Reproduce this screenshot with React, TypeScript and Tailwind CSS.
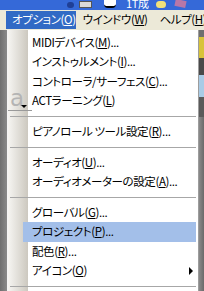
import React from 'react';

type Item = { label: string; key: string; tail?: string; highlight?: boolean; sub?: boolean; act?: boolean };

const groups: Item[][] = [
  [
    { label: 'MIDIデバイス', key: 'M', tail: '...' },
    { label: 'インストゥルメント', key: 'I', tail: '...' },
    { label: 'コントローラ/サーフェス', key: 'C', tail: '...' },
    { label: 'ACTラーニング', key: 'L', act: true },
  ],
  [{ label: 'ピアノロール ツール設定', key: 'R', tail: '...' }],
  [
    { label: 'オーディオ', key: 'U', tail: '...' },
    { label: 'オーディオメーターの設定', key: 'A', tail: '...' },
  ],
  [
    { label: 'グローバル', key: 'G', tail: '...' },
    { label: 'プロジェクト', key: 'P', tail: '...', highlight: true },
    { label: '配色', key: 'R', tail: '...' },
    { label: 'アイコン', key: 'O', sub: true },
  ],
];

function Row({ item }: { item: Item }) {
  return (
    <div className="relative h-[19.4px] flex">
      {item.act && (
        <div className="absolute left-0 top-0 w-[24px] h-[20px] border-b border-[#9a9a9a]">
          <span className="absolute left-[2px] top-[-7px] text-[23px] leading-[28px] text-[#b4b4b4] font-['DejaVu_Sans',sans-serif]">
            a
          </span>
          <span className="absolute left-[13px] top-[14px] w-0 h-0 border-l-[3px] border-r-[3px] border-t-[3px] border-l-transparent border-r-transparent border-t-black" />
        </div>
      )}
      <div
        className={`ml-[15px] mr-[2px] flex-1 flex items-center pl-[9px] ${
          item.highlight ? 'bg-[#a3bfe9]' : ''
        }`}
      >
        <span className="whitespace-nowrap">
          {item.label}(<u className="underline-offset-[1px]">{item.key}</u>){item.tail}
        </span>
        {item.sub && (
          <span className="ml-auto mr-[3px] w-0 h-0 border-t-[4px] border-b-[4px] border-l-[4px] border-t-transparent border-b-transparent border-l-black" />
        )}
      </div>
    </div>
  );
}

function Sep() {
  return (
    <div className="h-[11.4px] flex items-center">
      <div className="ml-[2px] mr-[2px] flex-1 h-px bg-[#a7a7a7]" />
    </div>
  );
}

export default function App() {
  return (
    <div
      className="w-[204px] h-[291px] overflow-hidden flex flex-col bg-[#777777] text-[11.5px] tracking-[-0.4px] text-black font-['Noto_Sans_CJK_JP','Noto_Sans_CJK_SC',sans-serif]"
      style={{ fontFeatureSettings: '"palt"' }}
    >
      {/* taskbar strip */}
      <div className="h-[10px] bg-[#3569d8] relative overflow-hidden shrink-0">
        <div className="absolute left-[67px] top-[2px] w-[7px] h-[6px] bg-[#1f3f96] rounded-sm" />
        <div className="absolute left-[79px] top-[1px] w-[13px] h-[7px] bg-[#d9d9d9] border border-[#555]" />
        <div className="absolute left-[104px] top-[0px] w-[12px] h-[8px] bg-white rounded-b-[4px] border-b-2 border-black" />
        <span className="absolute left-[126px] top-[-3px] text-[11px] leading-[13px] text-white">1T成</span>
        <div className="absolute left-[156px] top-[1px] w-[10px] h-[7px] bg-[#f1e27a] rounded-full" />
        <div className="absolute left-[175px] top-[0px] w-[11px] h-[7px] bg-[#b777a8] rotate-12" />
      </div>
      {/* menubar */}
      <div className="h-[20px] bg-[#ece9d8] flex items-stretch shrink-0 whitespace-nowrap">
        <div className="ml-[6px] w-[72px] my-[1px] bg-[#316ac5] text-white flex items-center pl-[6px]">
          オプション(<u>O</u>)
        </div>
        <div className="ml-[7px] flex items-center">
          ウインドウ(<u>W</u>)
        </div>
        <div className="ml-[12px] flex items-center">
          ヘルプ(<u>H</u>)
        </div>
      </div>
      {/* menu area */}
      <div className="flex flex-1 min-h-0">
        <div className="w-[7px] bg-[linear-gradient(to_right,#6f6f6f,#8a8a8a)] shrink-0" />
        <div className="w-[192px] shrink-0 border-l border-r border-l-[#f4f4f4] border-r-[#9d9d9d] pt-[3px] bg-[linear-gradient(to_right,#f6f5f2_0px,#ccc8bf_20px,#ffffff_20px)]">
          {groups.map((g, gi) => (
            <React.Fragment key={gi}>
              {gi > 0 && <Sep />}
              {g.map((it) => (
                <Row key={it.label} item={it} />
              ))}
            </React.Fragment>
          ))}
          <Sep />
        </div>
        <div className="flex-1 bg-[#6f6f6f] flex flex-col">
          <div className="h-[7px]" />
          <div className="h-[21px] bg-[#d8c33a]" />
          <div className="h-[17px] bg-[#4a4a4a]" />
          <div className="h-[22px] bg-[#a9cbe6]" />
          <div className="h-[20px] bg-[#5a5a5a]" />
          <div className="flex-1 bg-[linear-gradient(to_right,#8a8a8a,#6a6a6a)]" />
        </div>
      </div>
    </div>
  );
}
